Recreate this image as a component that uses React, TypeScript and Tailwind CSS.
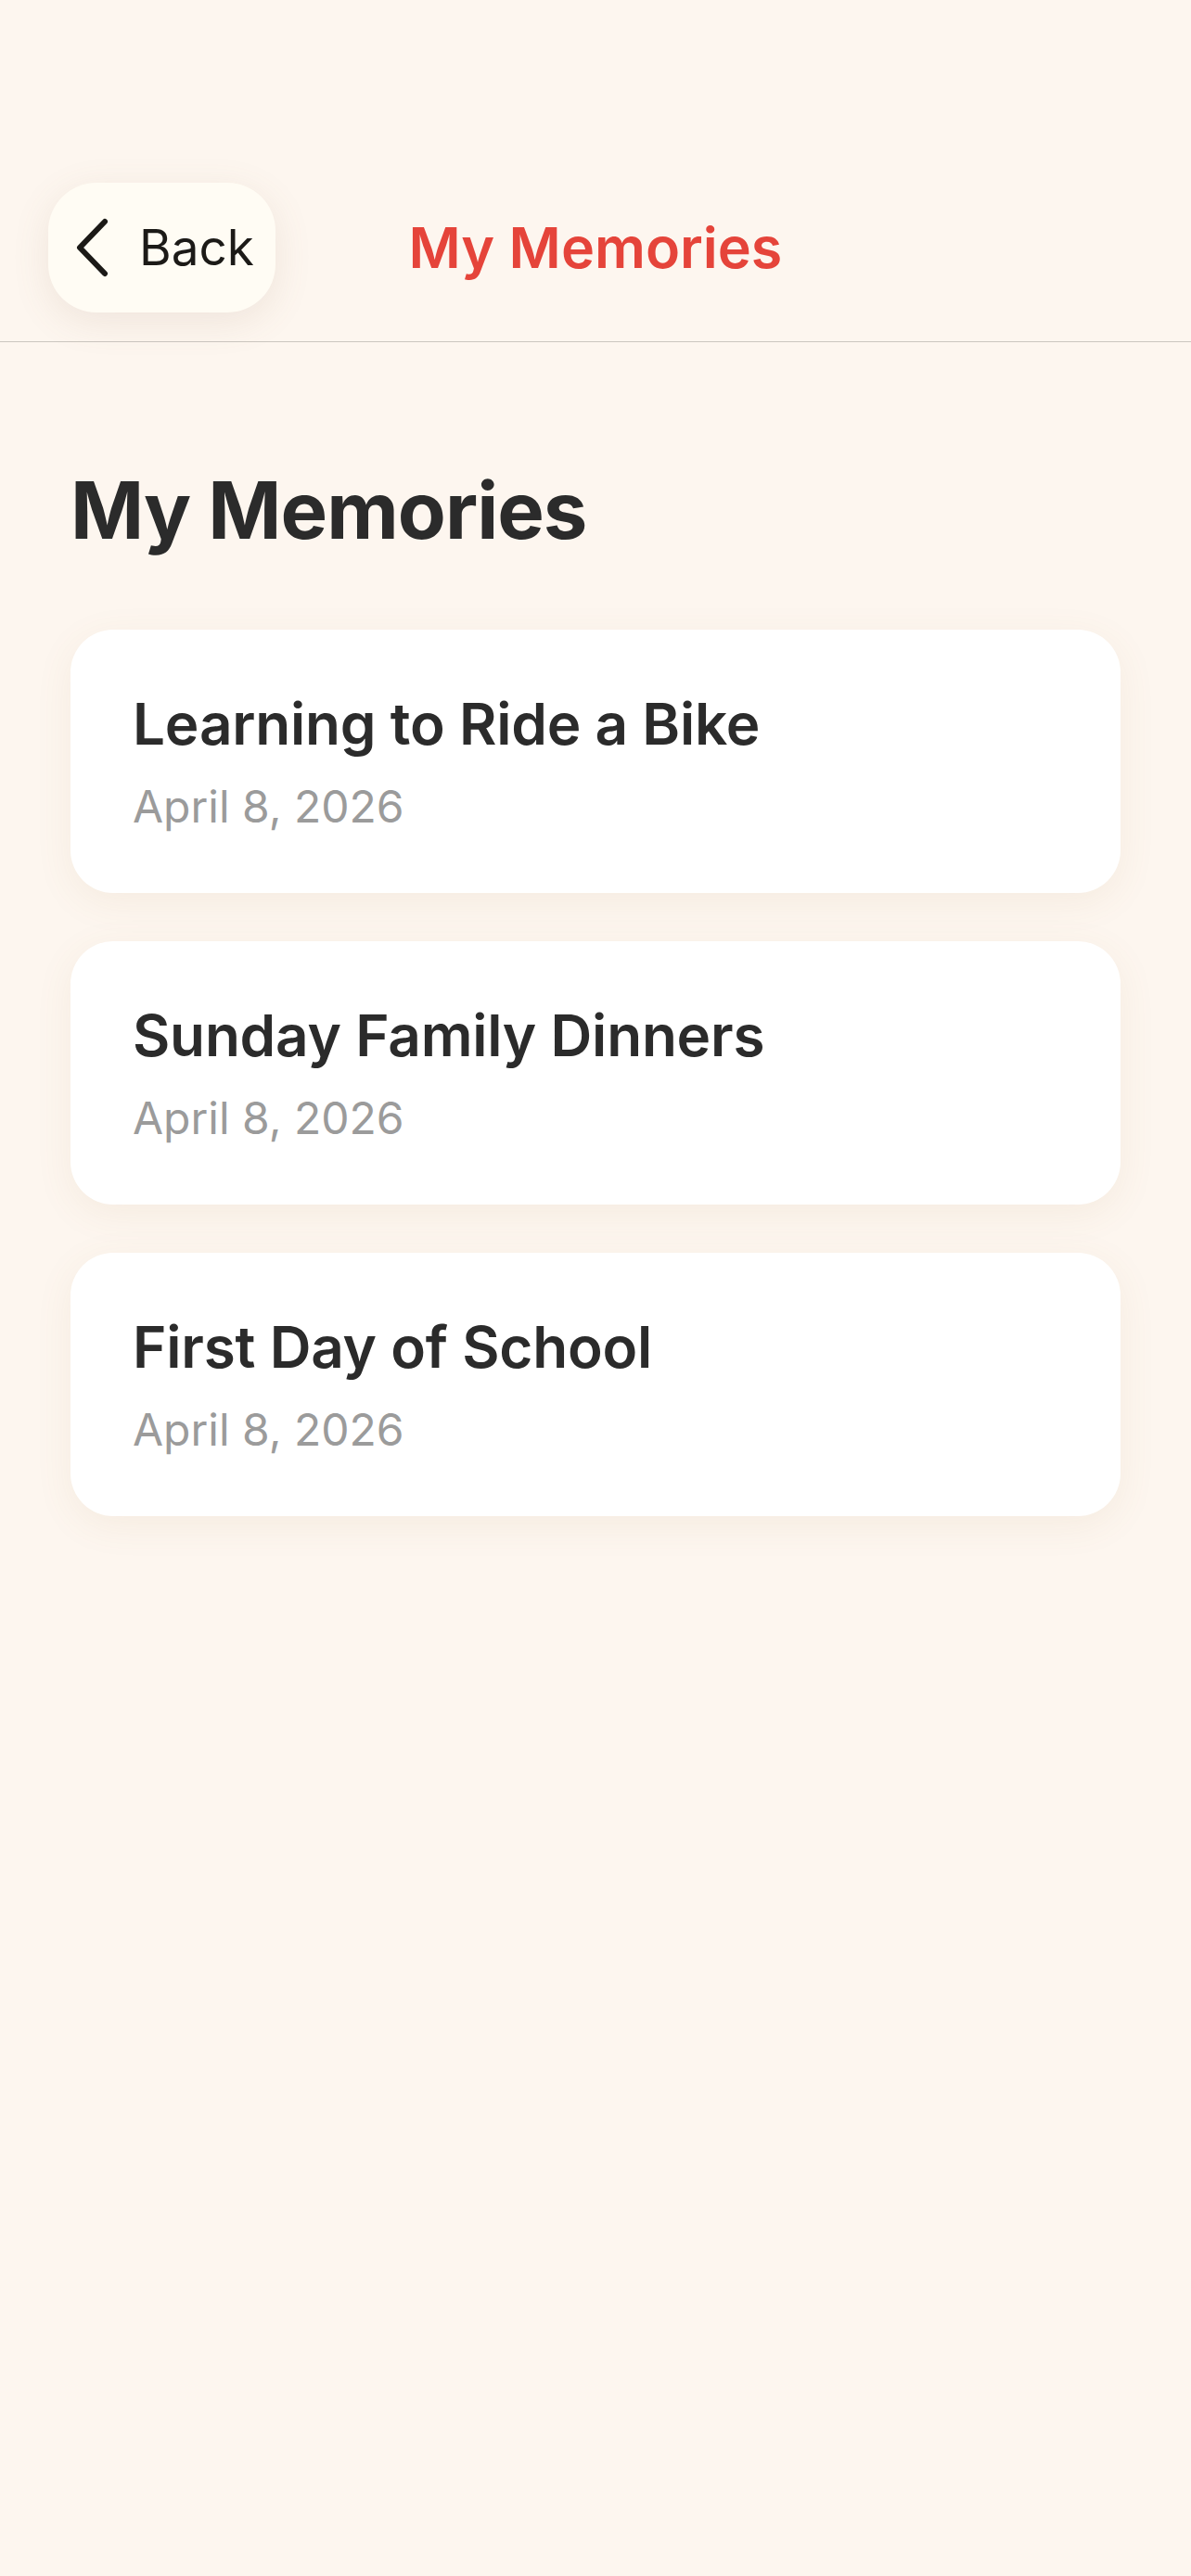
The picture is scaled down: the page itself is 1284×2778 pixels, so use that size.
const memories = [
  { title: "Learning to Ride a Bike", date: "April 8, 2026" },
  { title: "Sunday Family Dinners", date: "April 8, 2026" },
  { title: "First Day of School", date: "April 8, 2026" },
];

const App = () => {
  return (
    <div
      className="min-h-[2778px] w-full bg-[#fdf6ef]"
      style={{ fontFamily: "Inter, 'Noto Sans', sans-serif" }}
    >
      <header className="grid h-[369px] grid-cols-[1fr_auto_1fr] items-end border-b border-[#cbc6c0] px-[52px] pb-[31px]">
        <div>
          <button className="flex h-[140px] w-[245px] items-center gap-[30px] rounded-[52px] bg-[#fffcf4] pl-[26px] shadow-[0_10px_40px_rgba(140,110,80,0.12)]">
            <svg width="42" height="64" viewBox="0 0 42 64" fill="none">
              <path
                d="M35 4 L8 32 L35 60"
                stroke="#1c1a17"
                strokeWidth="6"
                strokeLinecap="round"
                strokeLinejoin="round"
              />
            </svg>
            <span className="text-[53px] leading-none text-[#1c1a17]">Back</span>
          </button>
        </div>
        <h1 className="flex h-[140px] items-center text-[61px] font-semibold leading-none text-[#e5443a]">
          My Memories
        </h1>
        <div />
      </header>

      <main className="px-[76px] pt-[139px]">
        <h2 className="text-[85px] font-bold leading-none tracking-[-1px] text-[#2b2b2b]">
          My Memories
        </h2>
        <div className="mt-[86px] flex flex-col gap-[52px]">
          {memories.map((m) => (
            <div
              key={m.title}
              className="flex h-[284px] flex-col rounded-[46px] bg-white px-[67px] pt-[71px] shadow-[0_10px_40px_rgba(150,110,70,0.08)]"
            >
              <span className="text-[62px] font-semibold leading-none tracking-[-0.2px] text-[#2b2b2b]">
                {m.title}
              </span>
              <span className="mt-[34px] text-[48px] leading-none text-[#9b9b9b]">
                {m.date}
              </span>
            </div>
          ))}
        </div>
      </main>
    </div>
  );
};

export default App;
